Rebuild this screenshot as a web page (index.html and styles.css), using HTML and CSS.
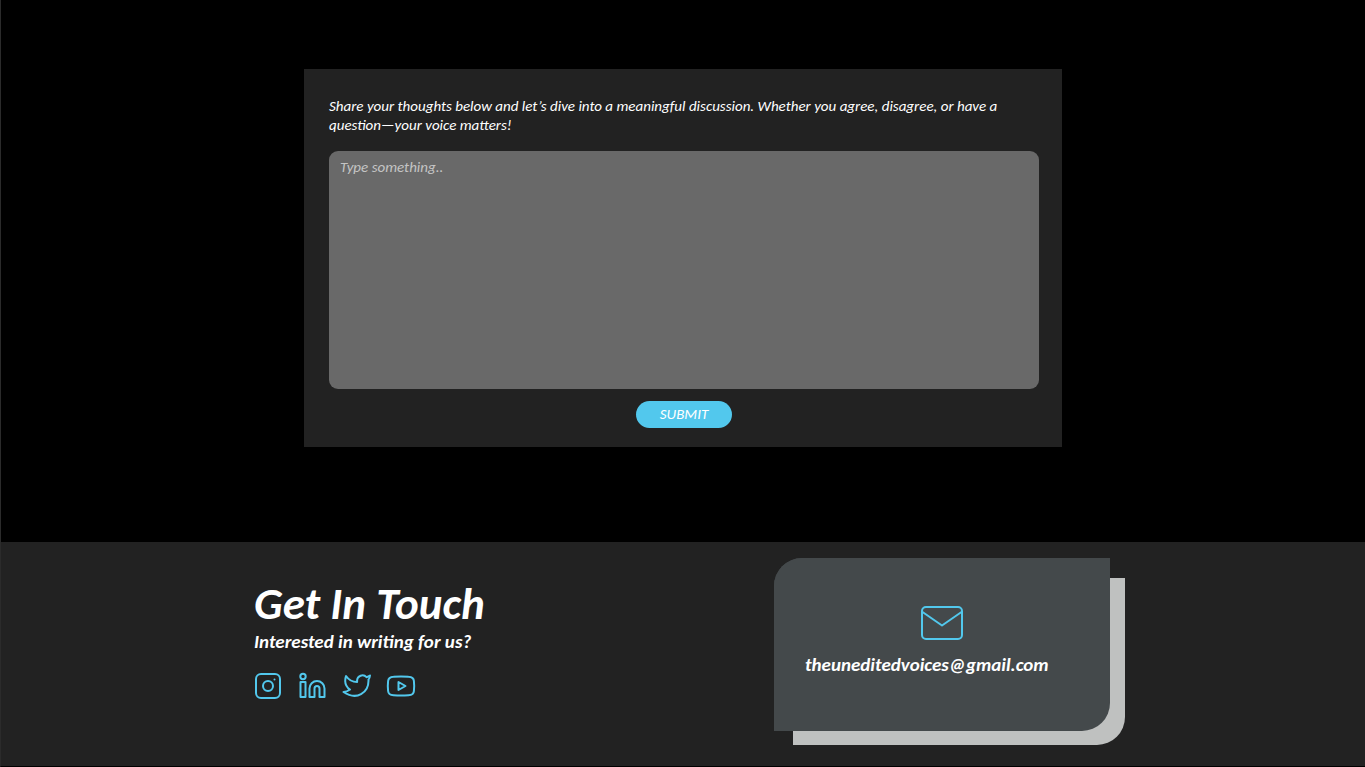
FILE: index.html
```html
<!DOCTYPE html>
<html lang="en">
<head>
<meta charset="utf-8">
<meta name="viewport" content="width=device-width, initial-scale=1">
<title>The Unedited Voices</title>
<link rel="stylesheet" href="styles.css">
</head>
<body>
<main class="discussion">
  <form class="comment-form">
    <label class="comment-label" for="comment">Share your thoughts below and let’s dive into a meaningful discussion. Whether you agree, disagree, or have a question—your voice matters!</label>
    <textarea class="comment-box" id="comment" placeholder="Type something.."></textarea>
    <button class="submit" type="submit">SUBMIT</button>
  </form>
</main>
<footer class="footer">
  <div class="footer-inner">
    <section class="contact">
      <h2 class="contact-title">Get In Touch</h2>
      <p class="contact-text">Interested in writing for us?</p>
      <nav class="social" aria-label="Social media">
        <a href="#" aria-label="Instagram"><svg class="icon" viewBox="0 0 28 28"><rect x="2" y="2" width="24" height="24" rx="5"/><circle cx="14" cy="14" r="5"/><circle class="dot" cx="20.500" cy="7.500" r="1"/></svg></a>
        <a href="#" aria-label="LinkedIn"><svg class="icon" viewBox="0 0 28 28"><circle cx="5" cy="4.500" r="2.700"/><path d="M2.500 10h5v15h-5zM11.500 25v-8.500a7.500 7.500 0 0 1 15 0V25h-5v-8.500a2.500 2.500 0 0 0-5 0V25z"/></svg></a>
        <a href="#" aria-label="Twitter"><svg class="icon" viewBox="0 0 28 28"><path d="M28 3.500c-1.100.8-2.300 1.300-3.500 1.700a5.400 5.400 0 0 0-9.400 3.600V10C10.500 10 6.700 8 4 4c0 0-3.500 9 4 13.500-2 1.500-4.300 2.500-6.500 2.500C15 29 26.500 20.500 26.500 8.800c0-.4 0-.7-.1-1 .9-.9 1.400-2.600 1.600-4.300z"/></svg></a>
        <a href="#" aria-label="YouTube"><svg class="icon" viewBox="0 0 28 28"><path d="M7.500 4.800Q15 4 22.500 4.800 27.700 5 27.900 9q.6 5 0 10-.2 4-5.400 4.300-7.500.6-15 0-5-.3-5.400-4.300-.6-5 0-10 .4-4 5.400-4.200zM12.500 10v8l7-4z"/></svg></a>
      </nav>
    </section>
    <address class="mail-card">
      <svg class="mail-icon" viewBox="0 0 44 36"><rect x="2" y="2" width="40" height="32" rx="4"/><path d="M2.500 7 22 20.500 41.500 7"/></svg>
      <a class="mail-link" href="mailto:theuneditedvoices@gmail.com">theuneditedvoices@gmail.com</a>
    </address>
  </div>
</footer>
</body>
</html>
```
FILE: styles.css
```css
* { box-sizing: border-box; }
body {
  margin: 0;
  min-height: 100vh;
  display: flex;
  flex-direction: column;
  background: #000;
  color: #fff;
  font-family: Carlito, Calibri, Lato, sans-serif;
  font-size: 15px;
  font-style: italic;
  border-left: 1px solid #2b2b2b;
  border-bottom: 1px solid #000;
}
.discussion {
  flex: 1;
  padding: 69px 24px 94px;
}
.comment-form {
  display: flex;
  flex-direction: column;
  max-width: 758px;
  margin: 0 auto;
  padding: 28px 23px 19px 25px;
  background: #222;
}
.comment-label { line-height: 19px; }
.comment-box {
  height: 238px;
  margin: 16px 0 12px;
  padding: 7px 11px;
  border: 0;
  border-radius: 9px;
  background: #696969;
  color: #fff;
  font: inherit;
  line-height: 18px;
  resize: none;
}
.comment-box::placeholder { color: #c4c4c4; opacity: 1; }
.submit {
  align-self: center;
  padding: 4px 24px;
  border: 0;
  border-radius: 14px;
  background: #52c8ed;
  color: #fff;
  font: inherit;
  line-height: 19px;
}
.footer {
  padding: 16px 26px 35px 24px;
  background: #222;
}
.footer-inner {
  display: flex;
  justify-content: space-between;
  max-width: 856px;
  margin: 0 auto;
}
.contact { padding-top: 19px; }
.contact-title {
  margin: 0;
  font-size: 45px;
  line-height: 54px;
}
.contact-text {
  margin: 0;
  font-size: 19px;
  font-weight: bold;
  line-height: 22px;
}
.social {
  display: flex;
  gap: 16px;
  margin-top: 19px;
}
.icon, .mail-icon {
  display: block;
  overflow: visible;
  fill: none;
  stroke: #52c8ed;
  stroke-width: 2;
  stroke-linejoin: round;
}
.icon { width: 28px; height: 28px; }
.dot { fill: #52c8ed; stroke: none; }
.mail-card {
  position: relative;
  display: flex;
  flex-direction: column;
  align-items: center;
  width: 336px;
  padding: 47px 31px 55px;
  border-radius: 28px 0;
  background: #44494b;
  z-index: 0;
}
.mail-card::before, .mail-card::after {
  content: "";
  position: absolute;
  z-index: -1;
  border-radius: 28px 0;
  background: #bfc1c0;
  inset: 20px -15px -14px 19px;
}
.mail-card::after {
  background: #44494b;
  inset: 0;
}
.mail-icon { width: 44px; height: 36px; }
.mail-link {
  align-self: flex-start;
  margin-top: 13px;
  color: #fff;
  font-size: 19px;
  font-weight: bold;
  line-height: 22px;
  text-decoration: none;
}
```
